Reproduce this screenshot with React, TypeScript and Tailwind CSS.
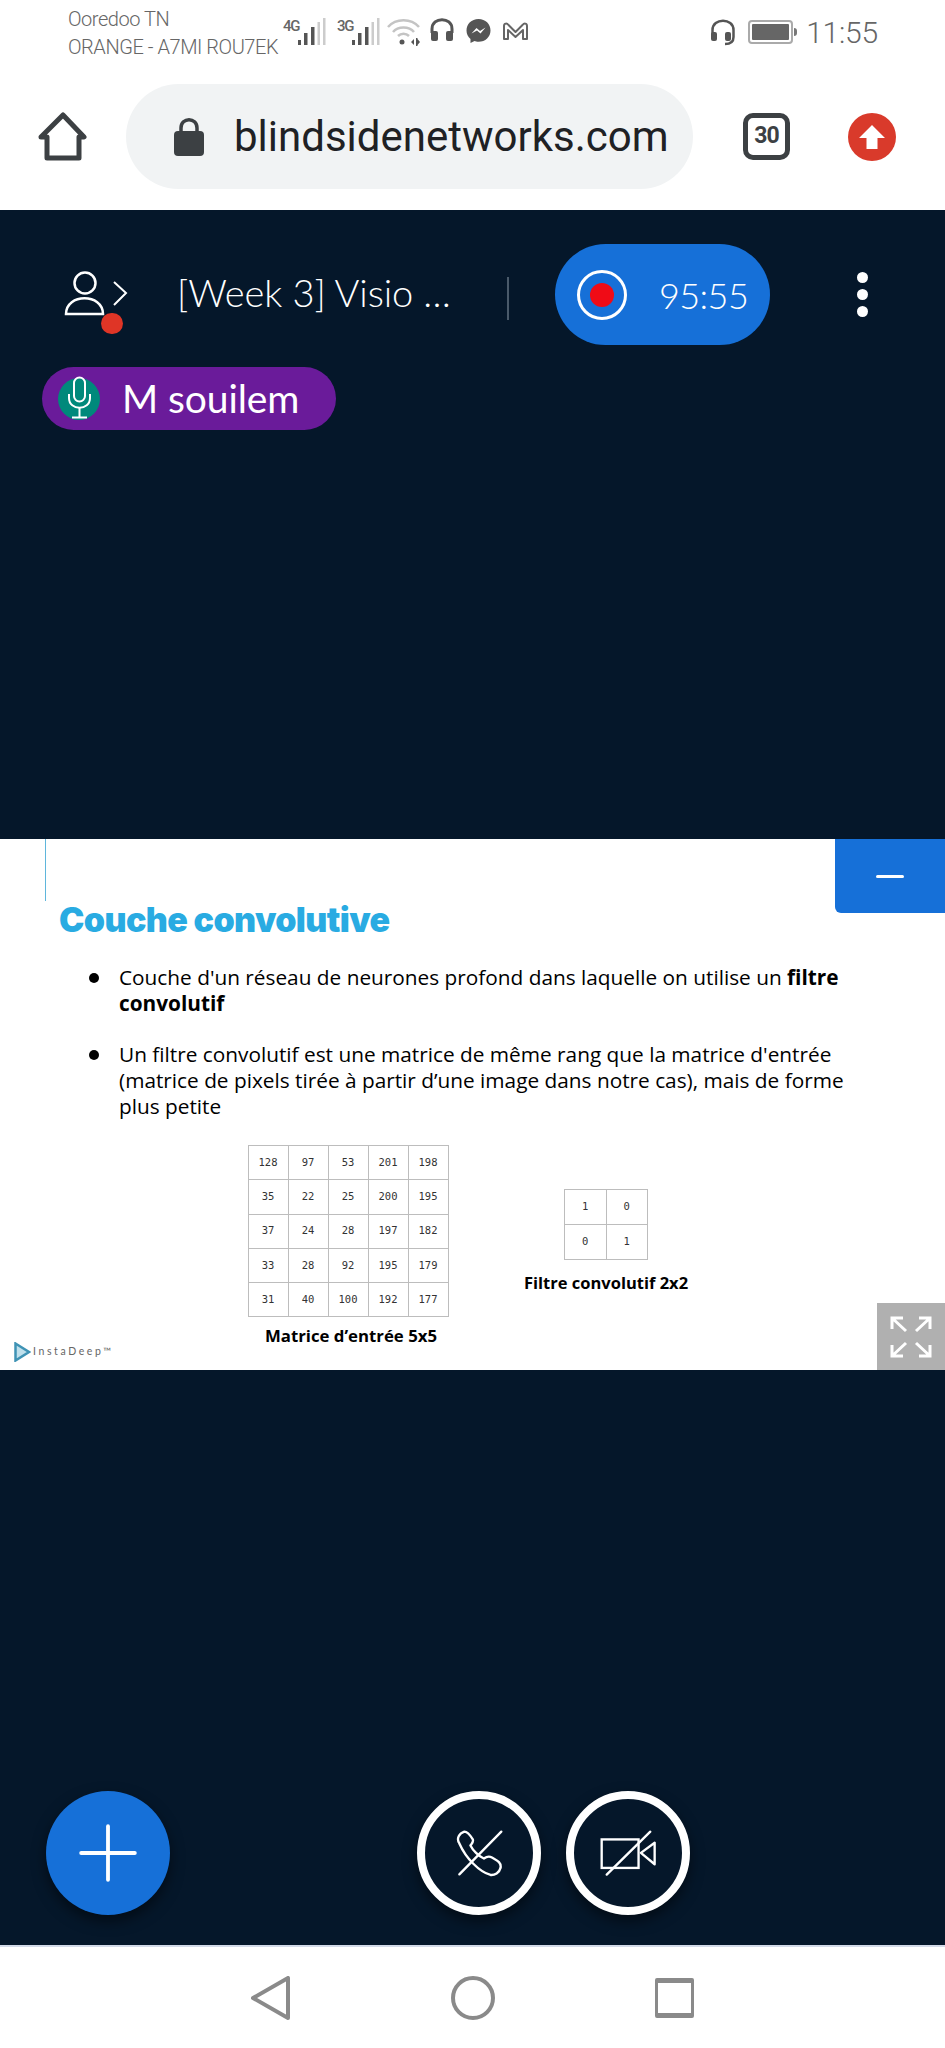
import { Plus } from "lucide-react";

const bigMatrix = [
  ["128", "97", "53", "201", "198"],
  ["35", "22", "25", "200", "195"],
  ["37", "24", "28", "197", "182"],
  ["33", "28", "92", "195", "179"],
  ["31", "40", "100", "192", "177"],
];
const smallMatrix = [
  ["1", "0"],
  ["0", "1"],
];

const Signal = ({ label }: { label: string }) => (
  <div className="flex items-start">
    <span className="text-[15px] leading-[16px] font-medium tracking-[-1.2px] text-[#666] font-['Roboto',sans-serif] w-[16px]">{label}</span>
    <svg width="28" height="28" viewBox="0 0 28 28" className="-ml-[1px]">
      <rect x="0" y="22" width="3" height="5" fill="#555" />
      <rect x="6" y="15" width="3.5" height="12" fill="#555" />
      <rect x="13" y="9" width="3.5" height="18" fill="#555" />
      <rect x="19.5" y="4" width="2.5" height="23" fill="#ccc" />
      <rect x="25" y="0" width="2.5" height="27" fill="#ccc" />
    </svg>
  </div>
);

const Matrix = ({ rows, cellW, cellH }: { rows: string[][]; cellW: string; cellH: string }) => (
  <div className="border-t border-l border-[#bdbdbd] font-['DejaVu_Sans_Mono',monospace] text-[10.5px] text-[#333]">
    {rows.map((row, i) => (
      <div key={i} className="flex">
        {row.map((v, j) => (
          <div key={j} className={`${cellW} ${cellH} flex items-center justify-center border-r border-b border-[#bdbdbd]`}>
            {v}
          </div>
        ))}
      </div>
    ))}
  </div>
);

const StatusBar = () => (
  <div className="h-[60px] flex items-start pl-[68px] pr-[67px] bg-white font-['Roboto',sans-serif] text-[#666]">
    <div className="w-[213px] pt-[5px] text-[20px] font-light leading-[28px] tracking-[-0.45px] whitespace-nowrap">
      <div>Ooredoo TN</div>
      <div>ORANGE - A7MI ROU7EK</div>
    </div>
    <div className="flex items-start pt-[18px]">
      <div className="ml-[2px]"><Signal label="4G" /></div>
      <div className="ml-[11px]"><Signal label="3G" /></div>
      <svg width="33" height="28" viewBox="0 0 33 28" fill="none" className="ml-[7px]">
        <path d="M1 9C9 0 24 0 32 9" stroke="#c4c4c4" strokeWidth="2.5" />
        <path d="M6 14C11 8 22 8 27 14" stroke="#c4c4c4" strokeWidth="2.5" />
        <path d="M11 18C14 15 19 15 22 18" stroke="#c4c4c4" strokeWidth="2.5" />
        <circle cx="15" cy="24" r="2.5" fill="#555" />
        <path d="M24 24l3-3v6zM29 20h1.500v8H29zM30.500 21l2.500 3-2.500 3z" fill="#555" />
      </svg>
      <svg width="24" height="24" viewBox="0 0 24 24" fill="none" className="ml-[10px]">
        <path d="M2 15V11C2 -1.500 22 -1.500 22 11V15" stroke="#555" strokeWidth="3" />
        <rect x="1" y="13" width="7" height="10" rx="2" fill="#555" />
        <rect x="16" y="13" width="7" height="10" rx="2" fill="#555" />
      </svg>
      <svg width="25" height="26" viewBox="0 0 25 26" className="ml-[12px]">
        <path d="M12.500 1C5.500 1 0.500 6 0.500 12.500C0.500 16 2 19 4.500 21V25L8.500 23C9.500 23.500 11 23.700 12.500 23.700C19.500 23.700 24.500 18.700 24.500 12.400C24.500 6 19.500 1 12.500 1Z" fill="#555" />
        <path d="M5.500 15.500L10.500 10L14 13L19.500 9.500L14.500 15.500L11 12.500Z" fill="#fff" />
      </svg>
      <svg width="27" height="19" viewBox="0 0 27 19" fill="none" className="ml-[11px] mt-[4px]">
        <path d="M2 17V4C2 1 5 1 6.500 3L13.500 10L20.500 3C22 1 25 1 25 4V17H21V8L13.500 15L6 8V17Z" stroke="#666" strokeWidth="2" strokeLinejoin="round" />
      </svg>
    </div>
    <div className="ml-auto flex items-start pt-[19px]">
      <svg width="26" height="27" viewBox="0 0 26 27" fill="none">
        <path d="M2.500 16V11C2.500 -1.500 23.500 -1.500 23.500 11V18C23.500 23 20 25 15 25" stroke="#555" strokeWidth="2.500" />
        <rect x="1" y="13" width="6" height="9" rx="2" fill="#555" />
        <rect x="15" y="13" width="6" height="9" rx="2" fill="#555" />
      </svg>
      <div className="ml-[12px] mt-[1px] w-[45px] h-[24px] rounded-[4px] border-2 border-[#aaa] p-[2px]">
        <div className="w-full h-full bg-[#666] rounded-[1px]" />
      </div>
      <div className="mt-[9px] ml-[1px] w-[3px] h-[8px] bg-[#777] rounded-r-sm" />
      <div className="ml-[9px] -mt-[4px] text-[30px] leading-[36px] font-light tracking-[-0.2px] whitespace-nowrap">11:55</div>
    </div>
  </div>
);

const BrowserBar = () => (
  <div className="h-[150px] flex items-start bg-white pt-[24px] pl-[38px]">
    <svg width="50" height="50" viewBox="0 0 50 50" fill="none" className="mt-[28px]">
      <path d="M25 3L46 25H41V46H9V25H3Z" stroke="#3c4043" strokeWidth="5" strokeLinejoin="round" />
    </svg>
    <div className="ml-[38px] w-[567px] h-[105px] rounded-full bg-[#f1f3f4] flex items-center pl-[48px]">
      <svg width="30" height="38" viewBox="0 0 30 38" className="shrink-0">
        <path d="M7 15V10C7 -1 23 -1 23 10V15" fill="none" stroke="#3c4043" strokeWidth="3.500" />
        <rect x="0" y="13" width="30" height="25" rx="4" fill="#3c4043" />
      </svg>
      <span className="ml-[30px] text-[42px] leading-none text-[#202124] font-['Roboto',sans-serif] whitespace-nowrap">blindsidenetworks.com</span>
    </div>
    <div className="ml-[50px] mt-[29px] w-[47px] h-[47px] rounded-[10px] border-[5px] border-[#3c4043] flex items-center justify-center text-[23px] font-bold text-[#3c4043] font-['Roboto',sans-serif] tracking-[-1px]">
      30
    </div>
    <div className="ml-[58px] mt-[29px] w-[48px] h-[48px] rounded-full bg-[#d93a2b] flex items-center justify-center">
      <svg width="28" height="26" viewBox="0 0 28 26">
        <path d="M14 1L27 14H19.500V25H8.500V14H1Z" fill="#fff" />
      </svg>
    </div>
  </div>
);

const MeetingHeader = () => (
  <div className="h-[629px] bg-[#05172a] shrink-0 font-['Lato',sans-serif] text-white">
    <div className="h-[157px] flex items-start pt-[34px]">
      <div className="relative ml-[64px] w-[64px] h-[60px] mt-[27px] shrink-0">
        <svg width="64" height="46" viewBox="0 0 64 46" fill="none">
          <circle cx="21" cy="12" r="10.500" stroke="#fff" strokeWidth="2.500" />
          <path d="M2 43C2 22 39 22 39 43Z" stroke="#fff" strokeWidth="2.500" />
          <path d="M50 11L62 22L50 34" stroke="#fff" strokeWidth="2" />
        </svg>
        <div className="absolute left-[37px] top-[42px] w-[22px] h-[21px] rounded-full bg-[#df3526]" />
      </div>
      <div className="ml-[49px] mt-[26px] w-[278px] shrink-0 text-[38px] leading-[44px] font-light tracking-[-0.1px] whitespace-nowrap">[Week 3] Visio …</div>
      <div className="mt-[33px] ml-[52px] w-[2px] h-[43px] shrink-0 bg-[#4a5a6a]" />
      <div className="ml-[46px] w-[215px] h-[101px] shrink-0 rounded-full bg-[#1670d8] flex items-center pl-[22px]">
        <div className="w-[50px] h-[50px] rounded-full border-[3px] border-white flex items-center justify-center">
          <div className="w-[24px] h-[24px] rounded-full bg-[#f00b16]" />
        </div>
        <span className="ml-[32px] text-[36px] font-light tracking-[-0.6px]">95:55</span>
      </div>
      <div className="ml-[87px] mt-[28px] flex flex-col gap-[6px] shrink-0">
        <div className="w-[11px] h-[11px] rounded-full bg-white" />
        <div className="w-[11px] h-[11px] rounded-full bg-white" />
        <div className="w-[11px] h-[11px] rounded-full bg-white" />
      </div>
    </div>
    <div className="ml-[42px] w-[294px] h-[63px] rounded-full bg-[#6a1b9a] flex items-center pl-[16px]">
      <div className="w-[42px] h-[42px] rounded-full bg-[#00897b] flex items-center justify-center">
        <svg width="24" height="44" viewBox="0 0 24 44" fill="none" className="-mt-[1px]">
          <rect x="7" y="1.500" width="11" height="24" rx="5.500" stroke="#fff" strokeWidth="2" />
          <path d="M2 18V22C2 35 23 35 23 22V18" stroke="#fff" strokeWidth="2" />
          <path d="M12.500 32V41M5 41.500H20" stroke="#fff" strokeWidth="2" />
        </svg>
      </div>
      <span className="ml-[22px] text-[39px] leading-none tracking-[-0.1px] whitespace-nowrap">M souilem</span>
    </div>
  </div>
);

const Slide = () => (
  <div className="relative h-[531px] shrink-0 bg-white font-['Open_Sans',sans-serif] text-black">
    <div className="ml-[45px] w-[1px] h-[62px] bg-[#5fb6dc]" />
    <h1 className="ml-[59px] text-[34px] leading-[38px] text-[#29abe2] tracking-[-0.6px] font-['Inter',sans-serif] font-black">Couche convolutive</h1>
    <ul className="mt-[25px]">
      <li className="flex">
        <div className="ml-[89px] mt-[9px] w-[10px] h-[10px] rounded-full bg-black shrink-0" />
        <p className="ml-[20px] w-[742px] text-[20.800px] leading-[26px]">
          Couche d'un réseau de neurones profond dans laquelle on utilise un <b>filtre</b>
          <br />
          <b>convolutif</b>
        </p>
      </li>
      <li className="flex mt-[25px]">
        <div className="ml-[89px] mt-[9px] w-[10px] h-[10px] rounded-full bg-black shrink-0" />
        <p className="ml-[20px] w-[742px] text-[20.800px] leading-[26px]">
          Un filtre convolutif est une matrice de même rang que la matrice d'entrée (matrice de pixels tirée à partir d’une image dans notre cas), mais de forme plus petite
        </p>
      </li>
    </ul>
    <div className="flex items-start mt-[26px]">
      <div className="ml-[248px] w-[200px] flex flex-col items-center">
        <Matrix rows={bigMatrix} cellW="w-[40px]" cellH="h-[34.250px]" />
        <div className="mt-[7px] ml-[6px] text-[16.800px] leading-[24px] font-bold whitespace-nowrap">Matrice d’entrée 5x5</div>
      </div>
      <div className="ml-[77px] w-[162px] mt-[44px] flex flex-col items-center">
        <Matrix rows={smallMatrix} cellW="w-[41.500px]" cellH="h-[35px]" />
        <div className="mt-[11px] text-[16.500px] leading-[24px] font-bold whitespace-nowrap">Filtre convolutif 2x2</div>
      </div>
    </div>
    <div className="absolute left-[14px] bottom-[8px] flex items-center">
      <svg width="17" height="20" viewBox="0 0 17 20" fill="#bfe0ec" stroke="#3f93b5" strokeWidth="2.5">
        <path d="M1.500 1.500L15 10L1.500 18.500Z" />
      </svg>
      <span className="ml-[2px] text-[10.500px] tracking-[2.600px] text-[#666] font-['Lato',sans-serif] whitespace-nowrap">InstaDeep™</span>
    </div>
    {/* minimise presentation */}
    <div className="absolute right-0 top-0 w-[110px] h-[74px] bg-[#1670d8] rounded-bl-[6px] flex items-center justify-center">
      <div className="w-[28px] h-[3px] bg-white rounded-full" />
    </div>
    {/* fullscreen */}
    <div className="absolute right-0 bottom-0 w-[68px] h-[67px] bg-[#b0b0b0] flex items-center justify-center">
      <svg width="42" height="42" viewBox="0 0 42 42" fill="none" stroke="#fff" strokeWidth="3">
        <path d="M16 15L2 2M2 13V2H13" />
        <path d="M26 15L40 2M29 2H40V13" />
        <path d="M16 27L2 40M2 29V40H13" />
        <path d="M26 27L40 40M40 29V40H29" />
      </svg>
    </div>
  </div>
);

const CallControls = () => (
  <div className="flex-1 bg-[#05172a] flex items-end pb-[30px] pl-[46px]">
    <div className="w-[124px] h-[124px] rounded-full bg-[#1670d8] shadow-[0_6px_14px_rgba(0,0,0,0.5)] flex items-center justify-center">
      <Plus size={92} strokeWidth={1} color="#fff" />
    </div>
    <div className="ml-[247px] w-[124px] h-[124px] rounded-full border-[8px] border-white shadow-[0_6px_14px_rgba(0,0,0,0.5)] flex items-center justify-center">
      <svg width="47" height="47" viewBox="165 150 140 140" fill="none" stroke="#fff" strokeWidth="7" strokeLinecap="round" strokeLinejoin="round">
        <path d="M175 190C165 175 175 160 190 155C200 155 207 165 215 178C218 186 212 190 208 196C215 210 232 228 248 235C255 230 262 226 272 232C285 240 300 245 298 262C294 278 280 285 268 284C235 275 195 235 175 190Z" />
        <path d="M175 282L300 155" />
      </svg>
    </div>
    <div className="ml-[25px] w-[124px] h-[124px] rounded-full border-[8px] border-white shadow-[0_6px_14px_rgba(0,0,0,0.5)] flex items-center justify-center">
      <svg width="57" height="47" viewBox="600 150 170 140" fill="none" stroke="#fff" strokeWidth="7" strokeLinecap="round">
        <rect x="605" y="178" width="110" height="85" />
        <path d="M722 218L763 188V252Z" strokeLinejoin="round" />
        <path d="M620 283L750 155" />
      </svg>
    </div>
  </div>
);

const NavBar = () => (
  <div className="h-[103px] shrink-0 bg-white border-t-[2px] border-[#d3dae8] flex items-start justify-center pt-[29px] gap-[160px]">
    <svg width="40" height="44" viewBox="0 0 40 44" fill="none">
      <path d="M37 2V42L2 22Z" stroke="#8a8a8a" strokeWidth="4" strokeLinejoin="round" />
    </svg>
    <svg width="44" height="44" viewBox="0 0 44 44" fill="none">
      <circle cx="22" cy="22" r="20" stroke="#8a8a8a" strokeWidth="4" />
    </svg>
    <div className="w-[39px] h-[40px] mt-[2px] border-[3px] border-t-[5px] border-b-[5px] border-[#8a8a8a] rounded-[2px]" />
  </div>
);

export default function App() {
  return (
    <div className="w-[945px] h-[2048px] flex flex-col overflow-hidden bg-white">
      <StatusBar />
      <BrowserBar />
      <MeetingHeader />
      <Slide />
      <CallControls />
      <NavBar />
    </div>
  );
}
